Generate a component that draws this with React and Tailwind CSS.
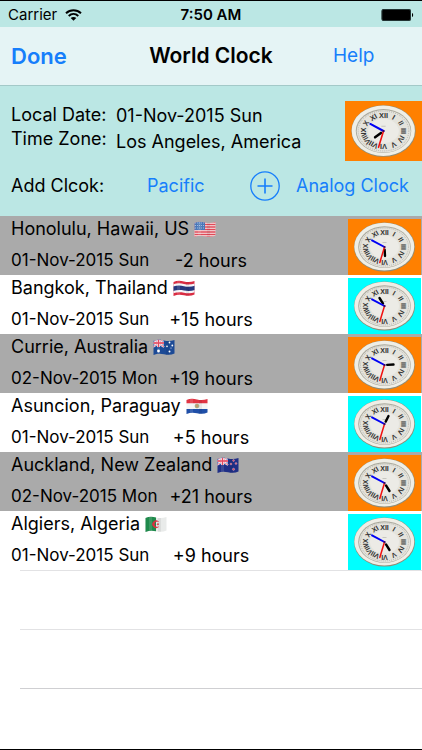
import React from 'react';

const clocks = [
  { place: 'Honolulu, Hawaii, US', flag: 'us', date: '01-Nov-2015 Sun', diff: '-2 hours', hour: [0.5, 9] },
  { place: 'Bangkok, Thailand', flag: 'th', date: '01-Nov-2015 Sun', diff: '+15 hours', hour: [-5, -8] },
  { place: 'Currie, Australia', flag: 'au', date: '02-Nov-2015 Mon', diff: '+19 hours', hour: [9, -0.5] },
  { place: 'Asuncion, Paraguay', flag: 'py', date: '01-Nov-2015 Sun', diff: '+5 hours', hour: [4, -8] },
  { place: 'Auckland, New Zealand', flag: 'nz', date: '02-Nov-2015 Mon', diff: '+21 hours', hour: [5, 8] },
  { place: 'Algiers, Algeria', flag: 'dz', date: '01-Nov-2015 Sun', diff: '+9 hours', hour: [5, 8] },
];

const numerals = ['XII', 'I', 'II', 'III', 'IV', 'V', 'VI', 'VII', 'VIII', 'IX', 'X', 'XI'];

// Oval dial, hands are given as offsets from the centre
const ClockFace = ({ hour, className }) => (
  <svg viewBox="0 0 73 56" className={className} role="img" aria-label="Analog clock">
    <ellipse cx="36.5" cy="28" rx="30.5" ry="24.5" fill="#8f8d78" />
    <ellipse cx="36.3" cy="27.7" rx="30" ry="23.9" fill="#efeee6" />
    <ellipse cx="36.5" cy="28" rx="26.3" ry="20.8" fill="#a9a89c" />
    <ellipse cx="36.7" cy="28.3" rx="25.6" ry="20.1" fill="#e4e3dc" />
    <ellipse cx="36.5" cy="28" rx="24" ry="18.9" fill="none" stroke="#8d8c84" strokeWidth="0.7" strokeDasharray="0.6 1.4" />
    <ellipse cx="36.5" cy="28" rx="14.5" ry="11.5" fill="#ecebe6" />
    {numerals.map((n, i) => {
      const a = (i * Math.PI) / 6;
      const x = 36.5 + Math.sin(a) * 19;
      const y = 28 - Math.cos(a) * 15;
      return (
        <text
          key={n}
          x={x}
          y={y}
          transform={`rotate(${i * 30} ${x} ${y})`}
          textAnchor="middle"
          dominantBaseline="central"
          fill="#333"
          className="font-['Liberation_Sans_Narrow','Liberation_Sans',sans-serif] text-[7px] font-bold"
        >
          {n}
        </text>
      );
    })}
    <path d="M34.5 23.5h4" stroke="#b0afa8" strokeWidth="0.6" />
    <g fill="none" strokeLinecap="round">
      <path d={`M${36.5 + hour[0] * 0.3} ${28 + hour[1] * 0.3}L${36.5 + hour[0]} ${28 + hour[1]}`} stroke="#000" strokeWidth="2.4" />
      <path d="M36.5 28L24 21.3" stroke="#0000f5" strokeWidth="1.9" />
      <path d="M36.5 28L31.8 43.5" stroke="#f01010" strokeWidth="1.5" />
    </g>
    <circle cx="36.5" cy="28" r="1" fill="#300a60" />
  </svg>
);

const UnionJack = () => (
  <g>
    <path d="M0 0h11v8H0z" fill="#2b4f9e" />
    <path d="M0 0l11 8M11 0L0 8" stroke="#fff" strokeWidth="2" />
    <path d="M0 0l11 8M11 0L0 8" stroke="#e0405a" strokeWidth="0.8" />
    <path d="M5.5 0v8M0 4h11" stroke="#fff" strokeWidth="2.8" />
    <path d="M5.5 0v8M0 4h11" stroke="#e0304a" strokeWidth="1.5" />
  </g>
);

const flagArt = {
  us: (
    <>
      <path d="M0 0h22v17H0z" fill="#f7eeee" />
      <path d="M0 1h22M0 3.5h22M0 6h22M0 8.5h22M0 11h22M0 13.5h22M0 16h22" stroke="#e04a58" strokeWidth="1.3" />
      <path d="M0 0h11v9H0z" fill="#4977b8" />
      <path d="M1 2h9M1 4.5h9M1 7h9" stroke="#d7e3f3" strokeWidth="0.8" strokeDasharray="0.8 1.2" />
    </>
  ),
  th: (
    <>
      <path d="M0 0h22v17H0z" fill="#d92c42" />
      <path d="M0 4.200C4 3 7.500 3 11 3.900S18 4.700 22 3.400V12.200C18 13.600 14.500 13.400 11 12.700S4 12 0 13.200z" fill="#f4f5f8" />
      <path d="M0 6.500C4 5.300 7.500 5.300 11 6.200S18 7 22 5.700V10C18 11.300 14.500 11.200 11 10.500S4 9.800 0 11z" fill="#26387e" />
    </>
  ),
  au: (
    <>
      <path d="M0 0h22v17H0z" fill="#1c4a96" />
      <UnionJack />
      <g fill="#fff">
        <circle cx="5.5" cy="12" r="1.4" />
        <circle cx="16.5" cy="3.5" r="0.9" />
        <circle cx="14" cy="7.3" r="0.9" />
        <circle cx="19.3" cy="6.5" r="0.9" />
        <circle cx="16.5" cy="12.5" r="1" />
        <circle cx="18" cy="9" r="0.5" />
      </g>
    </>
  ),
  py: (
    <>
      <path d="M0 0h22v17H0z" fill="#f5f5f5" />
      <path d="M0 0h22v5.2H0z" fill="#e03443" />
      <path d="M0 11h22v6H0z" fill="#1f4fa8" />
      <circle cx="11" cy="8" r="1.9" fill="#c6c08c" stroke="#7c8a5a" strokeWidth="0.6" />
      <circle cx="11" cy="8" r="0.7" fill="#d04a3a" />
    </>
  ),
  nz: (
    <>
      <path d="M0 0h22v17H0z" fill="#1f2f86" />
      <UnionJack />
      <g fill="#e8405a" stroke="#e8e0f0" strokeWidth="0.4">
        <circle cx="16.5" cy="3.5" r="0.9" />
        <circle cx="14" cy="7" r="0.9" />
        <circle cx="19" cy="6.5" r="0.9" />
        <circle cx="16.5" cy="12.3" r="1.1" />
      </g>
    </>
  ),
  dz: (
    <>
      <path d="M0 0h22v17H0z" fill="#e9ebea" />
      <path d="M0 0h11v17H0z" fill="#1f8a4c" />
      <path d="M13.6 5.6A3.6 3.6 0 1 0 13.6 10.8A2.9 2.9 0 1 1 13.6 5.6z" fill="#e03040" stroke="#e03040" strokeWidth="0.5" />
      <path d="M11.2 8.2l3-1-1.8 2.6V6.6l1.8 2.6z" fill="#e03040" />
    </>
  ),
};

// Every flag is clipped to the same waving outline
const Flag = ({ code }) => (
  <svg viewBox="0 0 22 17" className="h-[17px] w-[22px]" aria-hidden="true">
    <clipPath id={`wave-${code}`}>
      <path d="M0.5 2C4 0.4 7.500 0.600 11 1.500S18 2.300 21.500 1V14.600C18 16.200 14.500 16 11 15.200S4 14.500 0.500 16z" />
    </clipPath>
    <g clipPath={`url(#wave-${code})`}>
      {flagArt[code]}
      <path d="M13 0h3v17h-3z" fill="#000" opacity="0.06" />
      <path d="M4 0h3v17H4z" fill="#fff" opacity="0.12" />
    </g>
  </svg>
);

const StatusBar = () => (
  <div className="grid h-[26px] grid-cols-3 items-center px-2 pt-0.5 text-[15px]">
    <div className="flex items-center gap-2">
      <span>Carrier</span>
      <svg viewBox="0 0 17 12" className="h-3 w-[17px]" aria-hidden="true">
        <path d="M1 4.200C5.200 0.200 11.800 0.200 16 4.200" fill="none" stroke="#000" strokeWidth="1.9" />
        <path d="M3.700 7C6.500 4.300 10.500 4.300 13.300 7" fill="none" stroke="#000" strokeWidth="1.9" />
        <path d="M8.500 11.800L5.700 9C7.300 7.500 9.700 7.500 11.300 9z" />
      </svg>
    </div>
    <span className="text-center font-semibold">7:50 AM</span>
    <svg viewBox="0 0 33 14" className="h-3.5 w-[33px] justify-self-end" aria-hidden="true">
      <rect x="0.500" y="1" width="29.500" height="12" rx="2" fill="#000" />
      <rect x="1" y="1.500" width="28.500" height="11" rx="1.500" fill="none" stroke="#466" strokeWidth="0.500" />
      <path d="M31 5c1.500 0.300 1.500 3.700 0 4z" />
    </svg>
  </div>
);

const ClockRow = ({ clock, shaded }) => (
  <li className={`flex h-[59px] items-end justify-between pr-px ${shaded ? 'bg-[#aaaaaa]' : 'bg-white'}`}>
    <div className="flex flex-col self-stretch pl-[11px]">
      <div className="flex h-[26px] items-center gap-[5px] text-lg">
        <span>{clock.place}</span>
        <Flag code={clock.flag} />
      </div>
      <div className="flex h-[33px] items-center pt-1">
        <span className="w-[150px] text-[17px]">{clock.date}</span>
        <span className="w-[100px] text-center text-lg">{clock.diff}</span>
      </div>
    </div>
    <ClockFace hour={clock.hour} className={`h-14 w-[73px] ${shaded ? 'bg-[#ff8000]' : 'bg-[#00ffff]'}`} />
  </li>
);

const App = () => {
  return (
    <div className="flex min-h-screen flex-col whitespace-nowrap border-y border-black bg-white font-['Inter',sans-serif] text-black">
      <header className="bg-[#bbe7e4]">
        <StatusBar />
        <nav className="grid h-[59px] grid-cols-3 items-center border-b border-[#a3c9c8] bg-[#e5f4f5] text-[#167efb]">
          <button type="button" className="ml-[11px] justify-self-start text-[22px] font-semibold">Done</button>
          <h1 className="justify-self-center text-[21px] font-semibold text-black">World Clock</h1>
          <button type="button" className="ml-1 justify-self-center text-[19px]">Help</button>
        </nav>
      </header>

      <section className="h-[130px] bg-[#bbe7e4] pt-[15px] text-lg">
        <div className="flex items-start">
          <div className="w-[105px] pl-[11px] pt-0.5 leading-6">
            <div>Local Date:</div>
            <div>Time Zone:</div>
          </div>
          <div className="pl-[11px] pt-0.5 leading-[26px]">
            <div>01-Nov-2015 Sun</div>
            <div>Los Angeles, America</div>
          </div>
          <ClockFace hour={[-8, 6]} className="ml-auto h-[60px] w-[77px] bg-[#ff8000]" />
        </div>
        <div className="flex h-[50px] items-center pl-[11px] text-[#167efb]">
          <span className="w-[136px] text-black">Add Clcok:</span>
          <div className="w-[103px]">
            <button type="button">Pacific</button>
          </div>
          <button type="button" aria-label="Add clock">
            <svg viewBox="0 0 30 30" className="h-[30px] w-[30px]" fill="none" stroke="currentColor" strokeWidth="1.3">
              <circle cx="15" cy="15" r="14.200" />
              <path d="M15 7.500v15M7.500 15h15" strokeWidth="1.600" />
            </svg>
          </button>
          <button type="button" className="ml-4">Analog Clock</button>
        </div>
      </section>

      <ul>
        {clocks.map((clock, i) => (
          <ClockRow key={clock.place} clock={clock} shaded={i % 2 === 0} />
        ))}
      </ul>

      {/* empty rows */}
      <div className="ml-5 border-t border-[#e2e2e4]">
        <div className="h-[59px] border-b border-[#e2e2e4]"></div>
        <div className="h-[59px] border-b border-[#cfcfd2]"></div>
      </div>
    </div>
  );
};

export default App;
